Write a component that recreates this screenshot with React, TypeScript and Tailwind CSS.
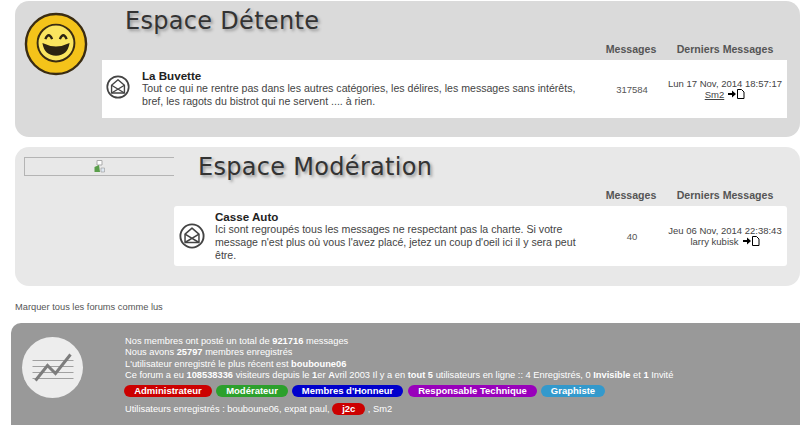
import React from 'react'

const sans = "font-['Liberation_Sans',Arial,sans-serif]"

function MailIcon({ size, className }: { size: number; className?: string }) {
  return (
    <svg width={size} height={size} viewBox="0 0 28 28" fill="none" stroke="#444" className={`shrink-0 ${className ?? ''}`}>
      <circle cx="14" cy="14" r="12.5" strokeWidth="2" />
      <path d="M6.5 12 L14 5.5 L21.5 12 V21 H6.5 Z" strokeWidth="1.6" strokeLinejoin="round" />
      <path d="M6.5 12 L21.5 21 M21.5 12 L6.5 21" strokeWidth="1.6" />
    </svg>
  )
}

function LastPostIcon() {
  return (
    <svg width="17" height="10" viewBox="0 0 17 10" className="inline-block align-[-1px] ml-1">
      <path d="M0 4 H4 V1.5 L8 5 L4 8.5 V6 H0 Z" fill="#000" />
      <path d="M9.5 0.5 H13.5 L16 3 V9.5 H9.5 Z" fill="#fff" stroke="#000" />
    </svg>
  )
}

function Smiley() {
  return (
    <svg width="64" height="64" viewBox="0 0 66 66" className="block">
      <circle cx="33" cy="33" r="31" fill="#f4c31a" stroke="#3a2c12" strokeWidth="2.5" />
      <circle cx="33" cy="32" r="19" fill="#fae55f" stroke="#3a2c12" strokeWidth="2" />
      <path d="M22 28 Q25.5 20 29 28" fill="none" stroke="#2c2412" strokeWidth="2.4" />
      <path d="M37 28 Q40.5 20 44 28" fill="none" stroke="#2c2412" strokeWidth="2.4" />
      <path d="M19 32 Q33 39 47 32 Q45 45 33 45 Q21 45 19 32 Z" fill="#2c2412" />
    </svg>
  )
}

function ChartCircle() {
  return (
    <div className="w-[61px] h-[61px] rounded-full bg-[#ededed] flex items-center justify-center">
      <svg width="44" height="34" viewBox="0 0 44 34" fill="none">
        <path d="M1.5 9.5 H42.5 M1.5 15.5 H42.5 M1.5 21.5 H42.5 M1.5 27.5 H42.5" stroke="#a0a0a0" strokeWidth="1" />
        <path d="M4.5 29.5 L16.5 14.5 L24.5 22.5 L39.5 3.5" stroke="#7d7d7d" strokeWidth="3" />
      </svg>
    </div>
  )
}

function BrokenImage() {
  return (
    <div className="w-[150px] h-[19px] border-y border-l border-[#b4b4b4] flex items-center justify-center">
      <svg width="11" height="13" viewBox="0 0 11 13">
        <path d="M3 0.5 H8 V5 H3 Z" fill="#fff" stroke="#aaa" />
        <path d="M0.5 7 L5 5 L6 12 H0.5 Z" fill="#5a9e4b" />
        <path d="M7 8 H10.5 V12 H7 Z" fill="#dfe8f2" stroke="#999" strokeWidth="0.6" />
      </svg>
    </div>
  )
}

function Panel({
  bg, left, title, titleClass, children,
}: { bg: string; left: React.ReactNode; title: string; titleClass: string; children: React.ReactNode }) {
  return (
    <section className={`${bg} rounded-[14px] ml-[15px] flex`}>
      {left}
      <div className="flex-1 min-w-0 mr-[13px]">
        <h2 className={`font-['DejaVu_Sans',Verdana,sans-serif] text-[24px] leading-[28px] tracking-[0.3px] text-[#333] [text-shadow:2px_2px_3px_#999] ${titleClass}`}>{title}</h2>
        <div className="flex justify-end h-[16px] mb-[2px] items-center text-[10.6px] font-bold text-[#555]">
          <span className="w-[64px] text-center whitespace-nowrap">Messages</span>
          <span className="w-[124px] text-center whitespace-nowrap">Derniers Messages</span>
        </div>
        {children}
      </div>
    </section>
  )
}

function ForumRow({
  name, desc, count, date, author, underline, height, rounded, icon,
}: { name: string; desc: React.ReactNode; count: string; date: string; author: string; underline?: boolean; height: string; rounded?: boolean; icon: React.ReactNode }) {
  return (
    <div className={`bg-white flex items-center ${height} ${rounded ? 'rounded-[3px]' : ''} text-[10.6px] leading-[13px] text-[#444]`}>
      {icon}
      <div className="flex-1 min-w-0">
        <div className="font-bold text-[11.6px] text-[#222] leading-[11px] mb-[1px]">{name}</div>
        <div className="whitespace-nowrap">{desc}</div>
      </div>
      <div className="w-[68px] text-center text-[9.5px] text-[#555] shrink-0">{count}</div>
      <div className="w-[118px] text-center text-[9.5px] leading-[11px] shrink-0 mr-[3px] whitespace-nowrap">
        <div>{date}</div>
        <div><span className={underline ? 'underline' : ''}>{author}</span><LastPostIcon /></div>
      </div>
    </div>
  )
}

function Badge({ color, width, children }: { color: string; width: string; children: React.ReactNode }) {
  return <span className={`${color} ${width} h-[12px] rounded-full text-white font-bold text-[9.5px] leading-[12px] text-center inline-block shrink-0`}>{children}</span>
}

export default function App() {
  return (
    <div className={`w-[800px] h-[425px] overflow-hidden bg-white pt-[1px] ${sans}`}>
      <Panel
        bg="bg-[#dadada]"
        left={<div className="w-[87px] shrink-0 pl-[9px] pt-[11px]"><Smiley /></div>}
        title="Espace Détente"
        titleClass="pl-[23px] pt-[6px] pb-[7px]"
      >
        <ForumRow
          height="h-[58px]"
          icon={<div className="w-[40px] flex justify-center mb-[4px] pr-[9px]"><MailIcon size={24} /></div>}
          name="La Buvette"
          desc={<>Tout ce qui ne rentre pas dans les autres catégories, les délires, les messages sans intérêts,<br />bref, les ragots du bistrot qui ne servent .... à rien.</>}
          count="317584"
          date="Lun 17 Nov, 2014 18:57:17"
          author="Sm2"
          underline
        />
        <div className="h-[19px]" />
      </Panel>

      <div className="h-[10px]" />

      <Panel
        bg="bg-[#e8e8e8]"
        left={<div className="w-[159px] shrink-0 pl-[9px] pt-[10px]"><BrokenImage /></div>}
        title="Espace Modération"
        titleClass="pl-[24px] pt-[6px] pb-[7px]"
      >
        <ForumRow
          height="h-[60px]"
          rounded
          icon={<div className="w-[41px] flex justify-center pr-[5px]"><MailIcon size={26} /></div>}
          name="Casse Auto"
          desc={<>Ici sont regroupés tous les messages ne respectant pas la charte. Si votre<br />message n'est plus où vous l'avez placé, jetez un coup d'oeil ici il y sera peut<br />être.</>}
          count="40"
          date="Jeu 06 Nov, 2014 22:38:43"
          author="larry kubisk"
        />
        <div className="h-[20px]" />
      </Panel>

      <div className="h-[37px] flex items-end pl-[15px] pb-[10px] text-[9.3px] leading-[11px] text-[#555]">Marquer tous les forums comme lus</div>

      <footer className="bg-[#999999] rounded-tl-[10px] ml-[11px] h-[102px] flex text-white text-[9.3px] leading-[11.3px]">
        <div className="w-[114px] shrink-0 pl-[11px] pt-[14px]"><ChartCircle /></div>
        <div className="pt-[13px]">
          <div>Nos membres ont posté un total de <b>921716</b> messages</div>
          <div>Nous avons <b>25797</b> membres enregistrés</div>
          <div>L'utilisateur enregistré le plus récent est <b>bouboune06</b></div>
          <div>Ce forum a eu <b>108538336</b> visiteurs depuis le <b>1</b>er <b>A</b>vril 2003 Il y a en <b>tout 5</b> utilisateurs en ligne :: 4 Enregistrés, 0 <b>Invisible</b> et <b>1</b> Invité</div>
          <div className="flex gap-[4px] mt-[4px] ml-[-1px]">
            <Badge color="bg-[#cc0000]" width="w-[88px]">Administrateur</Badge>
            <Badge color="bg-[#2ca02c]" width="w-[72px]">Modérateur</Badge>
            <Badge color="bg-[#0000cc]" width="w-[111px]">Membres d'Honneur</Badge>
            <Badge color="bg-[#9900bb]" width="w-[129px] ml-[1px]">Responsable Technique</Badge>
            <Badge color="bg-[#3399cc]" width="w-[64px]">Graphiste</Badge>
          </div>
          <div className="mt-[6px] flex items-center">
            <span>Utilisateurs enregistrés : bouboune06, expat paul,&nbsp;</span>
            <Badge color="bg-[#cc0000]" width="w-[33px]">j2c</Badge>
            <span>&nbsp;, Sm2</span>
          </div>
        </div>
      </footer>
    </div>
  )
}
